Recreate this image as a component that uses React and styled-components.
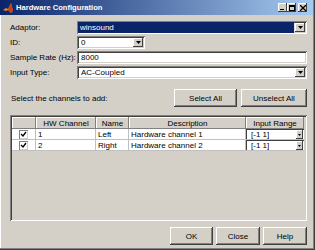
import styled, { createGlobalStyle } from "styled-components";

const GlobalStyle = createGlobalStyle`
  html, body {
    margin: 0;
    padding: 0;
    background: #d4d0c8;
  }
  body {
    font-family: "Liberation Sans", Arial, sans-serif;
    font-size: 8px;
    color: #000;
  }
`;

const raised = `
  box-shadow: inset -1px -1px #404040, inset 1px 1px #ffffff,
    inset -2px -2px #808080, inset 2px 2px #d4d0c8;
`;

const sunken = `
  box-shadow: inset 1px 1px #808080, inset -1px -1px #ffffff,
    inset 2px 2px #404040, inset -2px -2px #d4d0c8;
`;

const Window = styled.div`
  width: 315px;
  height: 250px;
  box-sizing: border-box;
  background: #d4d0c8;
  display: flex;
  flex-direction: column;
  padding: 0 2px 2px 2px;
  box-shadow: inset -1px -1px #404040, inset -2px -2px #808080,
    inset 1px 0 #ffffff;
`;

const TitleBar = styled.div`
  height: 15px;
  margin: 0 0 0 -2px;
  padding: 0 6px 0 3px;
  display: flex;
  align-items: center;
  background: linear-gradient(to right, #0a246a, #a6caf0);
`;

const TitleText = styled.span`
  flex: 1;
  margin-left: 3px;
  color: #fff;
  font-weight: bold;
  font-size: 7.6px;
`;

const CaptionButton = styled.div`
  width: 9px;
  height: 9px;
  margin-left: ${(p) => (p.$gap ? "2px" : "0")};
  background: #d4d0c8;
  display: flex;
  align-items: center;
  justify-content: center;
  box-shadow: inset -1px -1px #404040, inset 1px 1px #ffffff;
`;

const Content = styled.div`
  flex: 1;
  display: flex;
  flex-direction: column;
  padding: 6px 6px 0 8px;
`;

const FormRow = styled.div`
  display: flex;
  align-items: center;
  height: 13px;
  margin-bottom: 2px;
`;

const Label = styled.span`
  width: 67px;
  white-space: nowrap;
`;

const Field = styled.div`
  flex: ${(p) => (p.$width ? "none" : "1")};
  width: ${(p) => (p.$width ? `${p.$width}px` : "auto")};
  height: 13px;
  box-sizing: border-box;
  padding: ${(p) => (p.$selected ? "1px 2px 1px 1px" : "2px")};
  display: flex;
  align-items: center;
  background: ${(p) => (p.$selected ? "#dfe3ee" : "#fff")};
  ${sunken}
`;

const FieldText = styled.span`
  flex: 1;
  align-self: stretch;
  display: flex;
  align-items: center;
  padding-left: 2px;
  margin-right: ${(p) => (p.$selected ? "1px" : "0")};
  background: ${(p) => (p.$selected ? "#0a246a" : "transparent")};
  color: ${(p) => (p.$selected ? "#fff" : "#000")};
`;

const ArrowButton = styled.div`
  width: ${(p) => p.$w || 10}px;
  height: 9px;
  flex: none;
  background: #d4d0c8;
  display: flex;
  align-items: center;
  justify-content: center;
  box-shadow: inset -1px -1px #404040, inset 1px 1px #ffffff;
`;

const Arrow = () => (
  <svg width="5" height="3" viewBox="0 0 5 3">
    <path d="M0 0h5L2.5 3z" fill="#000" />
  </svg>
);

const ChannelRow = styled.div`
  display: flex;
  align-items: center;
  gap: 4px;
  margin-top: 8px;
  height: 18px;
`;

const Prompt = styled.span`
  flex: 1;
  padding-left: 1px;
`;

const Button = styled.div`
  width: ${(p) => p.$w}px;
  height: 18px;
  flex: none;
  display: flex;
  align-items: center;
  justify-content: center;
  background: #d4d0c8;
  ${raised}
`;

const Table = styled.div`
  margin-top: 8px;
  height: 106px;
  box-sizing: border-box;
  padding: 2px;
  background: #d4d0c8;
  ${sunken}
`;

const Grid = styled.div`
  display: grid;
  grid-template-columns: 24px 60px 33px 117px 58px;
  grid-auto-rows: 11px;
  grid-template-rows: 12px;
`;

const HeadCell = styled.div`
  display: flex;
  align-items: center;
  justify-content: center;
  background: #d4d0c8;
  box-shadow: inset -1px -1px #808080, inset 1px 1px #ffffff;
`;

const Cell = styled.div`
  display: flex;
  align-items: center;
  justify-content: ${(p) => (p.$center ? "center" : "flex-start")};
  padding-left: ${(p) => (p.$center ? "0" : "2px")};
  background: #fff;
  border-right: 1px solid #c0c0c0;
  border-bottom: 1px solid #c0c0c0;
  white-space: nowrap;
  overflow: hidden;
`;

const RangeCell = styled.div`
  display: flex;
  align-items: center;
  background: #fff;
  border-bottom: 1px solid #c0c0c0;
  box-shadow: inset 1px 1px #404040;
  padding: 1px 1px 0 3px;
`;

const Check = styled.div`
  width: 9px;
  height: 9px;
  box-sizing: border-box;
  background: #fff;
  display: flex;
  align-items: center;
  justify-content: center;
  box-shadow: inset 1px 1px #808080, inset -1px -1px #d4d0c8;
`;

const Footer = styled.div`
  display: flex;
  justify-content: flex-end;
  gap: 3px;
  margin-top: 6px;
`;

const CheckMark = () => (
  <svg width="7" height="7" viewBox="0 0 7 7">
    <path d="M1 3l2 2 3-4" stroke="#000" strokeWidth="1.3" fill="none" />
  </svg>
);

const MatlabIcon = () => (
  <svg width="10" height="10" viewBox="0 0 10 10">
    <path d="M0 7l3-2 2 1 3-6 2 8-2 2-3-3-2 1z" fill="#e8871e" />
    <path d="M5 6l3-6 2 8-2 2z" fill="#c4401a" />
  </svg>
);

const channels = [
  { id: 1, name: "Left", desc: "Hardware channel 1" },
  { id: 2, name: "Right", desc: "Hardware channel 2" },
];

const App = () => {
  return (
    <>
      <GlobalStyle />
      <Window>
        <TitleBar>
          <MatlabIcon />
          <TitleText>Hardware Configuration</TitleText>
          <CaptionButton>
            <svg width="5" height="5" viewBox="0 0 5 5">
              <path d="M0 4h4v1H0z" fill="#000" />
            </svg>
          </CaptionButton>
          <CaptionButton>
            <svg width="6" height="6" viewBox="0 0 6 6">
              <path d="M0 0h6v6H0zM1 2v3h4V2z" fill="#000" fillRule="evenodd" />
            </svg>
          </CaptionButton>
          <CaptionButton $gap>
            <svg width="6" height="6" viewBox="0 0 6 6">
              <path d="M0 0l6 6M6 0L0 6" stroke="#000" strokeWidth="1.3" />
            </svg>
          </CaptionButton>
        </TitleBar>
        <Content>
          <FormRow>
            <Label>Adaptor:</Label>
            <Field $selected>
              <FieldText $selected>winsound</FieldText>
              <ArrowButton>
                <Arrow />
              </ArrowButton>
            </Field>
          </FormRow>
          <FormRow>
            <Label>ID:</Label>
            <Field $width={68}>
              <FieldText>0</FieldText>
              <ArrowButton>
                <Arrow />
              </ArrowButton>
            </Field>
          </FormRow>
          <FormRow>
            <Label>Sample Rate (Hz):</Label>
            <Field>
              <FieldText>8000</FieldText>
            </Field>
          </FormRow>
          <FormRow>
            <Label>Input Type:</Label>
            <Field>
              <FieldText>AC-Coupled</FieldText>
              <ArrowButton>
                <Arrow />
              </ArrowButton>
            </Field>
          </FormRow>
          <ChannelRow>
            <Prompt>Select the channels to add:</Prompt>
            <Button $w={63}>Select All</Button>
            <Button $w={66}>Unselect All</Button>
          </ChannelRow>
          <Table>
            <Grid>
              <HeadCell />
              <HeadCell>HW Channel</HeadCell>
              <HeadCell>Name</HeadCell>
              <HeadCell>Description</HeadCell>
              <HeadCell>Input Range</HeadCell>
              {channels.map((c) => (
                <Row key={c.id} channel={c} />
              ))}
            </Grid>
          </Table>
          <Footer>
            <Button $w={43}>OK</Button>
            <Button $w={44}>Close</Button>
            <Button $w={44}>Help</Button>
          </Footer>
        </Content>
      </Window>
    </>
  );
};

const Row = ({ channel }) => (
  <>
    <Cell $center>
      <Check>
        <CheckMark />
      </Check>
    </Cell>
    <Cell>{channel.id}</Cell>
    <Cell>{channel.name}</Cell>
    <Cell>{channel.desc}</Cell>
    <RangeCell>
      <FieldText>[-1 1]</FieldText>
      <ArrowButton $w={7}>
        <svg width="3" height="2" viewBox="0 0 3 2">
          <path d="M0 0h3L1.5 2z" fill="#000" />
        </svg>
      </ArrowButton>
    </RangeCell>
  </>
);

export default App;
